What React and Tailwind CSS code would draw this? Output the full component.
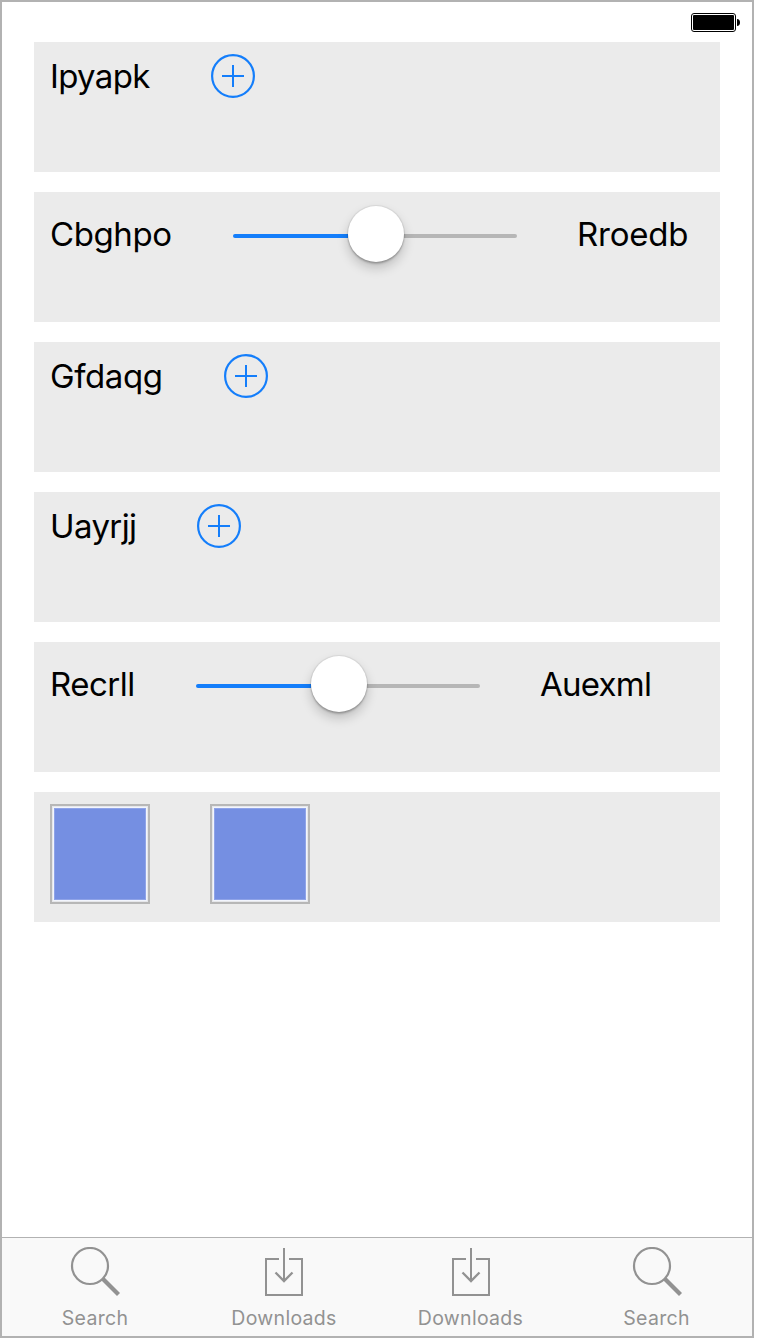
const textFont = "font-['Inter',sans-serif]";

function Label({ children, className }) {
  return (
    <span className={`${textFont} block shrink-0 whitespace-nowrap text-[33px] leading-10 text-black ${className}`}>
      {children}
    </span>
  );
}

function Card({ children }) {
  return (
    <section className="h-[130px] bg-[#ebebeb] px-4 py-3">
      <div className="flex items-center gap-[60px]">{children}</div>
    </section>
  );
}

function AddButton() {
  return (
    <button type="button" aria-label="Add" className="ml-px size-11 shrink-0">
      <svg viewBox="0 0 44 44" className="block size-11" fill="none" stroke="#147efb" strokeWidth="2">
        <circle cx="22" cy="22" r="20.9" strokeWidth="2.2" />
        <path d="M11 22H33M22 11V33" />
      </svg>
    </button>
  );
}

function Slider() {
  return (
    <div className="flex h-[60px] w-[284px] shrink-0 items-center">
      <div className="mt-1 h-1 w-[115px] rounded-l-full bg-[#147efb]" />
      <div className="relative z-10 size-14 shrink-0 rounded-full bg-white shadow-[0_0_1px_1px_rgba(0,0,0,0.07),0_2px_2px_rgba(0,0,0,0.2),0_6px_12px_rgba(0,0,0,0.2)]" />
      <div className="mt-1 h-1 flex-1 rounded-r-full bg-[#b6b6b6]" />
    </div>
  );
}

function Swatch() {
  return (
    <div className="size-[100px] border-2 border-[#b7b7b7] bg-[#e6e7ea] p-px">
      <div className="size-full border border-[#f2f5fd] bg-[#758fe2] shadow-[inset_0_0_0_1px_#8fa3e8]" />
    </div>
  );
}

function SearchIcon() {
  return (
    <svg viewBox="0 0 50 50" className="block size-[50px]" fill="none" stroke="#929292">
      <circle cx="20" cy="19" r="18" strokeWidth="2.2" />
      <path d="M32.5 31.5L48.5 47.5" strokeWidth="4.2" />
    </svg>
  );
}

function DownloadIcon() {
  return (
    <svg viewBox="0 0 38 50" className="block h-[50px] w-[38px]" fill="none" stroke="#929292" strokeWidth="2">
      <path d="M14 12H1V48H37V12H24M19 1V33" />
      <path d="M10.5 25.5L19 34L27.5 25.5" strokeWidth="2.3" />
    </svg>
  );
}

function Tab({ icon, children, className }) {
  return (
    <a className={`flex flex-1 flex-col items-center pt-[9px] text-[#929292] ${className}`}>
      {icon}
      <span className={`${textFont} mt-[9px] block text-[19.5px] leading-6`}>{children}</span>
    </a>
  );
}

export default function App() {
  return (
    <div className="h-[1340px] w-[760px] bg-white">
      <main className="flex h-[1338px] w-[754px] flex-col border-2 border-[#b2b2b2] bg-white">
        <header className="flex h-10 shrink-0 items-start justify-end pr-3 pt-[11px]">
          <svg viewBox="0 0 49 19" className="block h-[19px] w-[49px]">
            <rect x="0.5" y="0.5" width="44" height="18" rx="2.5" fill="none" stroke="#000" />
            <rect x="2" y="2" width="41" height="15" rx="1" />
            <path d="M46 6C48 6 49 7.5 49 9.5S48 13 46 13Z" />
          </svg>
        </header>
        <div className="flex flex-1 flex-col gap-5 pl-8 pr-8">
          <Card>
            <Label className="w-[100px] tracking-[-0.65px]">Ipyapk</Label>
            <AddButton />
          </Card>
          <Card>
            <Label className="w-[123px] tracking-[-0.4px]">Cbghpo</Label>
            <Slider />
            <Label className="tracking-[-0.2px]">Rroedb</Label>
          </Card>
          <Card>
            <Label className="w-[113px] tracking-[-0.4px]">Gfdaqg</Label>
            <AddButton />
          </Card>
          <Card>
            <Label className="w-[86px] tracking-[-0.6px]">Uayrjj</Label>
            <AddButton />
          </Card>
          <Card>
            <Label className="w-[86px] tracking-[-0.5px]">Recrll</Label>
            <Slider />
            <Label className="tracking-[-0.75px]">Auexml</Label>
          </Card>
          <Card>
            <Swatch />
            <Swatch />
          </Card>
        </div>
        <nav className="flex h-[99px] shrink-0 border-t border-[#b2b2b2] bg-[#f9f9f9]">
          <Tab icon={<SearchIcon />} className="pr-[1.5px] tracking-[0.3px]">Search</Tab>
          <Tab icon={<DownloadIcon />} className="pl-[1.5px] tracking-[0.3px]">Downloads</Tab>
          <Tab icon={<DownloadIcon />} className="pl-[0.5px] tracking-[0.3px]">Downloads</Tab>
          <Tab icon={<SearchIcon />} className="pr-[2.5px] tracking-[0.3px]">Search</Tab>
        </nav>
      </main>
    </div>
  );
}
